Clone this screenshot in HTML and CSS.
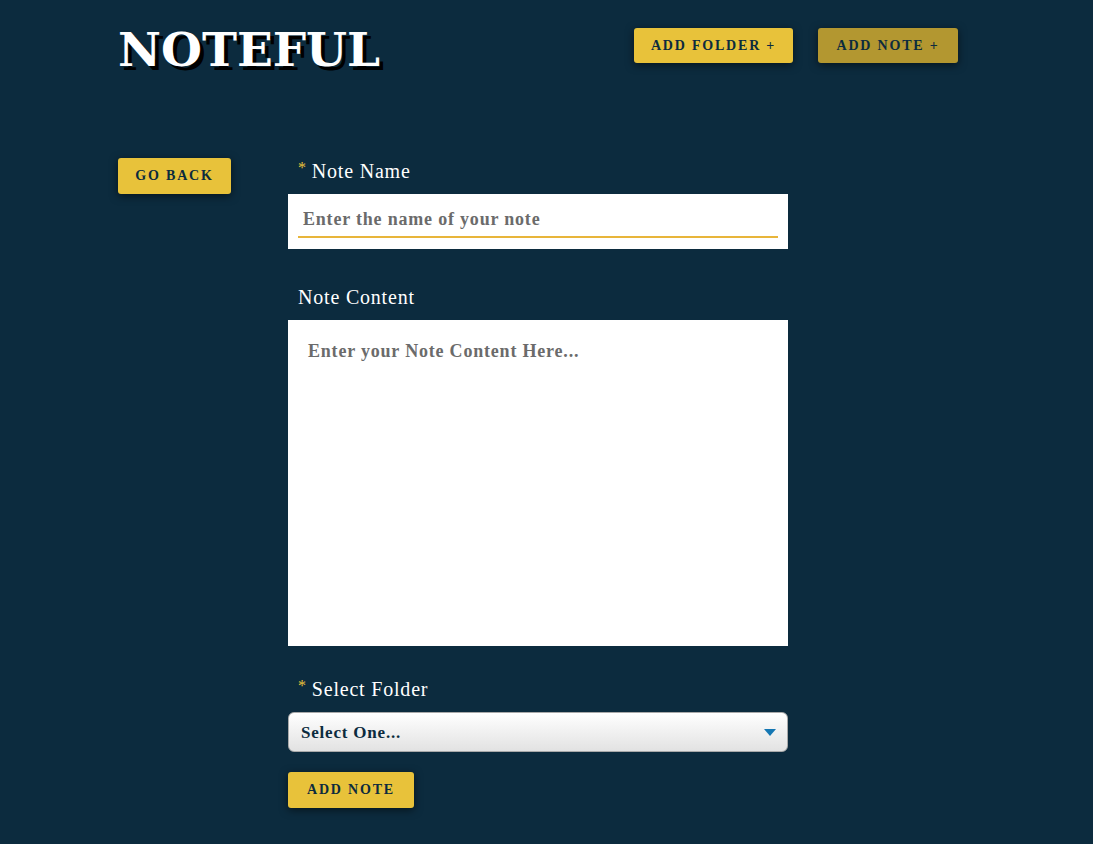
FILE: index.html
```html
<!DOCTYPE html>
<html lang="en">
<head>
<meta charset="utf-8">
<title>Noteful</title>
<link rel="stylesheet" href="styles.css">
</head>
<body>
<header class="top">
  <h1 class="logo">NOTEFUL</h1>
  <nav class="actions">
    <button class="btn btn-folder" type="button">ADD FOLDER +</button>
    <button class="btn btn-dim" type="button">ADD NOTE +</button>
  </nav>
</header>
<main class="page">
  <aside class="side">
    <button class="btn btn-back" type="button">GO BACK</button>
  </aside>
  <form class="form">
    <div class="field">
      <label class="label" for="name"><span class="star">*</span>Note Name</label>
      <div class="input-box">
        <input class="input" id="name" type="text" placeholder="Enter the name of your note">
      </div>
    </div>
    <div class="field field-content">
      <label class="label" for="content">Note Content</label>
      <textarea class="textarea" id="content" placeholder="Enter your Note Content Here..."></textarea>
    </div>
    <div class="field field-select">
      <label class="label" for="folder"><span class="star">*</span>Select Folder</label>
      <div class="select-wrap">
        <select class="select" id="folder">
          <option>Select One...</option>
        </select>
      </div>
    </div>
    <button class="btn btn-submit" type="submit">ADD NOTE</button>
  </form>
</main>
</body>
</html>
```
FILE: styles.css
```css
html, body {
  margin: 0;
  padding: 0;
}
body {
  background: #0c2b3e;
  min-height: 844px;
  font-family: "Liberation Serif", "Times New Roman", serif;
  color: #ffffff;
}
.top {
  display: flex;
  align-items: flex-start;
  padding: 28px 0 0 118px;
  height: 130px;
  box-sizing: border-box;
}
.logo {
  margin: -2px 0 0 0;
  width: 516px;
  font-family: "DejaVu Serif", "Liberation Serif", serif;
  font-weight: 900;
  font-size: 47px;
  line-height: 1;
  letter-spacing: 0;
  color: #ffffff;
  text-shadow: 4px 4px 0 #000000;
}
.actions {
  display: flex;
  gap: 25px;
}
.btn {
  display: inline-flex;
  align-items: center;
  justify-content: center;
  white-space: nowrap;
  border: 0;
  border-radius: 3px;
  background: #e8c23a;
  color: #0c2b3e;
  font-family: "Liberation Serif", "Times New Roman", serif;
  font-weight: bold;
  font-size: 14px;
  letter-spacing: 1.8px;
  height: 35px;
  padding: 0;
  box-shadow: 0 2px 8px rgba(0, 0, 0, 0.55);
  cursor: pointer;
}
.btn-folder { width: 159px; }
.btn-dim {
  width: 140px;
  background: #b39730;
}
.btn-back {
  width: 113px;
  height: 36px;
}
.page {
  display: flex;
  padding: 28px 0 0 118px;
}
.side {
  width: 170px;
  flex: none;
}
.form {
  width: 500px;
  display: flex;
  flex-direction: column;
  align-items: flex-start;
}
.field {
  width: 100%;
}
.field-content { margin-top: 35px; }
.field-select { margin-top: 30px; }
.label {
  display: block;
  padding: 0 0 8px 10px;
  height: 28px;
  line-height: 26px;
  font-size: 20px;
  letter-spacing: 0.8px;
  color: #ffffff;
}
.star {
  color: #e8c23a;
  font-size: 16px;
  line-height: 0;
  vertical-align: 5px;
  margin-right: 5px;
}
.input-box {
  background: #ffffff;
  height: 55px;
  box-sizing: border-box;
  padding: 8px 10px 0 10px;
}
.input {
  display: block;
  width: 100%;
  height: 36px;
  box-sizing: border-box;
  border: 0;
  border-bottom: 2px solid #e8b53a;
  outline: none;
  padding: 1px 0 0 5px;
  font-family: "Liberation Serif", "Times New Roman", serif;
  font-size: 18px;
  font-weight: bold;
  letter-spacing: 0.8px;
  color: #333;
  background: transparent;
}
.input::placeholder,
.textarea::placeholder {
  color: #6b6b6b;
}
.textarea {
  display: block;
  width: 100%;
  height: 326px;
  box-sizing: border-box;
  border: 0;
  outline: none;
  resize: none;
  padding: 19px 20px;
  font-family: "Liberation Serif", "Times New Roman", serif;
  font-size: 18px;
  font-weight: bold;
  letter-spacing: 0.8px;
  line-height: 24px;
  color: #333;
  background: #ffffff;
}
.select-wrap {
  position: relative;
  width: 100%;
}
.select-wrap::after {
  content: "";
  position: absolute;
  right: 12px;
  top: 17px;
  border-left: 6px solid transparent;
  border-right: 6px solid transparent;
  border-top: 7px solid #1577b3;
  pointer-events: none;
}
.select {
  display: block;
  width: 100%;
  height: 40px;
  -webkit-appearance: none;
  appearance: none;
  border: 1px solid #a9a9a9;
  border-radius: 6px;
  background: linear-gradient(#ffffff, #e2e2e2);
  padding: 0 12px;
  font-family: "Liberation Serif", "Times New Roman", serif;
  font-size: 17px;
  font-weight: bold;
  letter-spacing: 0.8px;
  color: #0c2b3e;
  outline: none;
}
.btn-submit {
  margin-top: 20px;
  width: 126px;
  height: 36px;
}
```
